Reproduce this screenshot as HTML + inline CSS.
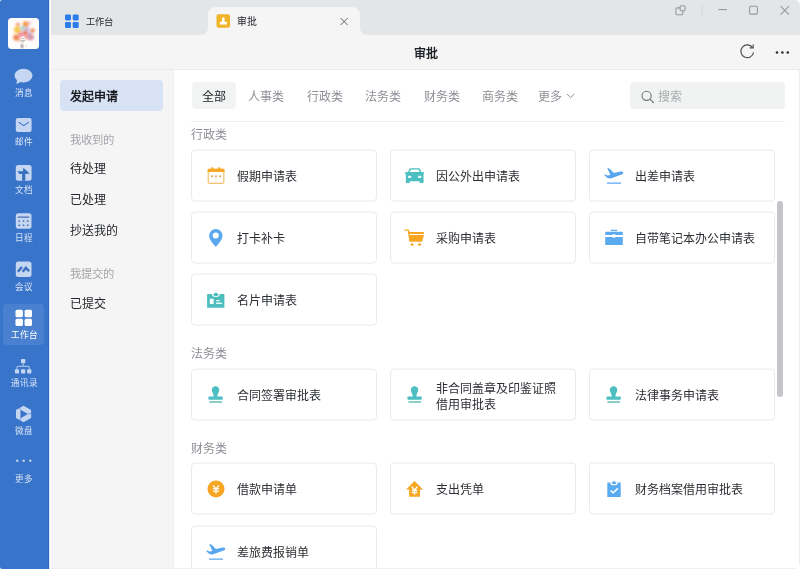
<!DOCTYPE html>
<html lang="zh-CN">
<head>
<meta charset="utf-8">
<title>审批</title>
<style>
*{box-sizing:border-box;margin:0;padding:0}
html,body{width:800px;height:569px;overflow:hidden;background:#fff}
body{font-family:"Liberation Sans",sans-serif;color:#1f2329;position:relative}
svg{display:block;overflow:visible}
#app{position:absolute;left:0;top:0;width:800px;height:569px;overflow:hidden;will-change:transform;border-radius:2px 5px 6px 2px}
#side{position:absolute;left:0;top:0;width:49px;height:569px;background:#3874c9}
#avatar{position:absolute;left:8px;top:18px;width:31px;height:31px;border-radius:3.5px;background:#fefdfc;overflow:hidden}
.sico{position:absolute;left:0;top:0}
.slab{position:absolute;left:0;width:48px;text-align:center;color:#dae5f6;font-size:8.6px;line-height:12px;white-space:nowrap}
#sactive{position:absolute;left:3px;top:304px;width:41px;height:41px;border-radius:4px;background:#4a80d0}
#titlebar{position:absolute;left:49px;top:0;width:751px;height:35px;background:#e3e5e7}
#tab2{position:absolute;left:208px;top:7px;width:152px;height:28px;background:#f5f5f5;border-radius:8px 8px 0 0}
.tabtxt{position:absolute;top:7.6px;line-height:28px;font-size:9.3px;color:#26292e;white-space:nowrap}
#header{position:absolute;left:49px;top:35px;width:751px;height:35px;background:#f5f5f5;border-bottom:1px solid #ebebeb;z-index:3}
#htitle{position:absolute;left:1px;width:751px;top:1.5px;line-height:34px;text-align:center;font-size:12px;font-weight:bold;color:#1f2329}
#nav{position:absolute;left:49px;top:69px;width:125px;height:500px;background:#f5f5f5;border-right:1px solid #eeeeee}
#navsel{position:absolute;left:11px;top:11px;width:103px;height:31px;border-radius:4px;background:#d7e3f5}
.nitem{position:absolute;left:21px;font-size:12px;line-height:20px;white-space:nowrap;color:#24272c}
.ngrey{color:#a3a5a9;font-size:11.3px}
#main{position:absolute;left:174px;top:69px;width:626px;height:500px;background:#fff;overflow:hidden}
.ctab{position:absolute;top:13.6px;height:28px;line-height:28px;font-size:12px;color:#8d9096;white-space:nowrap}
#csel{position:absolute;left:18px;top:13px;width:44px;height:27px;border-radius:4px;background:#f2f3f3}
#search{position:absolute;left:456px;top:13px;width:155px;height:27px;border-radius:4px;background:#f1f2f2}
#divider{position:absolute;left:17px;top:52px;width:594px;height:1px;background:#eeeeee}
.sec{position:absolute;left:17px;font-size:12px;line-height:18px;color:#8d9096;white-space:nowrap}
.card{position:absolute;width:186px;height:52px;border:1px solid #eaeaea;border-radius:4px;background:#fff;transform:translateY(-0.45px)}
.card svg{position:absolute;left:13px;top:14px;transform:translateY(.45px)}
.card span{position:absolute;left:45px;top:1px;transform:translateY(.45px);line-height:50px;font-size:12px;color:#2c2f34;white-space:nowrap}
.card span.two{line-height:16px;top:11px}
#scroll{position:absolute;left:602.6px;top:132px;width:6.6px;height:196px;border-radius:3.3px;background:#c3c5c9}
#edge{position:absolute;left:48px;top:0;width:3px;height:569px;background:linear-gradient(90deg,#3268ba 0,#3268ba 1px,#dfe9f9 1px,#dfe9f9 2px,#fbfcfe 2px,#fbfcfe 3px);z-index:5}
#bedge{position:absolute;left:50px;top:568px;width:750px;height:1px;background:#efefef;z-index:5}
#redge{position:absolute;left:799px;top:70px;width:1px;height:499px;background:#efefef;z-index:5}
</style>
</head>
<body>
<div id="app">
<div id="side">
  <div id="sactive"></div>
  <div id="avatar">
    <svg width="31" height="31" viewBox="0 0 31 31">
      <defs><filter id="bl" x="-30%" y="-30%" width="160%" height="160%"><feGaussianBlur stdDeviation="0.95"/></filter></defs>
      <g filter="url(#bl)">
        <circle cx="9.8" cy="6.6" r="2.1" fill="#f0a382"/>
        <circle cx="17.7" cy="6.2" r="3" fill="#f59b4c"/>
        <circle cx="21.6" cy="4.9" r="1.7" fill="#ecc0cc"/>
        <circle cx="9.3" cy="11.8" r="3.4" fill="#f7c94c"/>
        <circle cx="14.9" cy="10.3" r="2.5" fill="#b4d6d4"/>
        <circle cx="19.2" cy="11.3" r="2.3" fill="#c3b6de"/>
        <circle cx="24.6" cy="12.6" r="2.3" fill="#f08f60"/>
        <circle cx="21.3" cy="15.6" r="1.9" fill="#aab9da"/>
        <circle cx="17.2" cy="15" r="2.5" fill="#f07a52"/>
        <circle cx="13.2" cy="16.2" r="3" fill="#f59aa6"/>
        <circle cx="8.3" cy="19.6" r="3.2" fill="#f08c5c"/>
        <circle cx="22.6" cy="19.2" r="3.3" fill="#d898aa"/>
        <circle cx="18.3" cy="19.2" r="2" fill="#e9a09a"/>
        <circle cx="11.5" cy="22" r="1.6" fill="#f3b090"/>
      </g>
      <circle cx="14.9" cy="20" r="1.6" fill="#fff"/>
      <circle cx="14.9" cy="20.2" r="0.55" fill="#443"/>
      <path d="M13.2 22.4 L14.9 23.4 L16.8 22.2" fill="none" stroke="#332" stroke-width=".7" opacity=".8"/>
      <path d="M14.2 25.2 L12.8 29.6 L15.1 29.6 Z" fill="#3a2c2a" filter="url(#bl)"/>
      <path d="M18 26.6 L18.3 29.2" stroke="#eadfae" stroke-width="1.1" opacity=".8"/>
    </svg>
  </div>
  <svg class="sico" width="49" height="569" viewBox="0 0 49 569">
    <g fill="#c5d6f2">
      <!-- message -->
      <ellipse cx="23.5" cy="75.6" rx="9" ry="6.9"/>
      <path d="M17.2 79.5 L16.3 83.9 L21.5 81.8 Z"/>
      <!-- mail -->
      <rect x="15.8" y="118" width="15.8" height="14" rx="2"/>
      <!-- docs -->
      <rect x="15.8" y="165" width="15.8" height="15.8" rx="2.5"/>
      <!-- calendar -->
      <rect x="15.8" y="213.2" width="15.7" height="15.6" rx="2.5"/>
      <!-- meeting -->
      <rect x="15.8" y="261.4" width="15.7" height="15.7" rx="2.5"/>
      <!-- contacts -->
      <rect x="21" y="358.9" width="4.3" height="4.3" rx=".8"/>
      <rect x="14.9" y="369.2" width="4.2" height="4.3" rx=".8"/>
      <rect x="21" y="369.2" width="4.3" height="4.3" rx=".8"/>
      <rect x="27.1" y="369.2" width="4.3" height="4.3" rx=".8"/>
      <!-- weipan -->
      <path d="M23.55 405.8 L31.1 410 L31.1 418 L23.55 422.3 L16 418 L16 410 Z M20.5 409.7 L20.5 418.3 L27.9 414 Z" fill-rule="evenodd"/>
      <!-- more dots -->
      <circle cx="17.2" cy="460.8" r="1.2"/><circle cx="23.7" cy="460.8" r="1.2"/><circle cx="30.3" cy="460.8" r="1.2"/>
    </g>
    <!-- contacts connectors -->
    <path d="M16.9 369.2 V367.6 Q16.9 366.3 18.2 366.3 H28 Q29.3 366.3 29.3 367.6 V369.2 M23.15 363.2 V366.3" fill="none" stroke="#9dbbe8" stroke-width="1.2"/>
    <!-- mail flap -->
    <path d="M19 122.4 L23.7 125.6 L28.4 122.4" fill="none" stroke="#3974ca" stroke-width="1.1" stroke-linecap="round" stroke-linejoin="round"/>
    <!-- docs glyph -->
    <path d="M23.3 167.8 L29.7 173.5 L25.3 174 L25.3 180.8 L22.1 180.8 L22.1 174 L19.5 174 L17.2 171.2 L22.9 171.2 Z" fill="#3a6fc0"/>
    <!-- calendar glyph -->
    <g fill="#476fb2">
      <rect x="17.7" y="216.4" width="11.6" height="1.3" rx=".3"/>
      <rect x="18.45" y="220.2" width="1.6" height="1.6" rx=".3"/><rect x="22.7" y="220.2" width="1.6" height="1.6" rx=".3"/><rect x="26.9" y="220.2" width="1.6" height="1.6" rx=".3"/>
      <rect x="18.45" y="224.45" width="1.6" height="1.6" rx=".3"/><rect x="22.7" y="224.45" width="1.6" height="1.6" rx=".3"/><rect x="26.9" y="224.45" width="1.6" height="1.6" rx=".3"/>
    </g>
    <!-- meeting glyph -->
    <path d="M17.9 271.7 L21.9 267 M22.7 271.7 L25.9 267.8 L29.1 271.3" fill="none" stroke="#3a6fc0" stroke-width="2.4" stroke-linejoin="miter"/>
    <!-- weipan dividers -->
    <path d="M20.5 409.7 L19.3 407.9 M27.9 414 L31.1 413.3 M20.5 418.3 L20.3 420.6" fill="none" stroke="#3974ca" stroke-width=".55"/>
    <!-- workbench -->
    <g fill="#ffffff">
      <rect x="15.5" y="309.8" width="7.4" height="7.4" rx="1.5"/><rect x="24.6" y="309.8" width="7.4" height="7.4" rx="1.5"/>
      <rect x="15.5" y="318.7" width="7.4" height="7.4" rx="1.5"/><rect x="24.6" y="318.7" width="7.4" height="7.4" rx="1.5"/>
    </g>
  </svg>
  <div class="slab" style="top:87px">消息</div>
  <div class="slab" style="top:135.5px">邮件</div>
  <div class="slab" style="top:184px">文档</div>
  <div class="slab" style="top:232px">日程</div>
  <div class="slab" style="top:280.5px">会议</div>
  <div class="slab" style="top:329px;color:#fff">工作台</div>
  <div class="slab" style="top:377px">通讯录</div>
  <div class="slab" style="top:425px">微盘</div>
  <div class="slab" style="top:473px">更多</div>
</div>
<div id="edge"></div><div id="bedge"></div><div id="redge"></div>
<div id="titlebar">
  <svg width="751" height="35" viewBox="49 0 751 35" style="position:absolute;left:0;top:0">
    <!-- inverse corners for active tab -->
    <path d="M200 35 H208 V27 Q208 35 200 35 Z" fill="#f5f5f5"/>
    <path d="M368 35 H360 V27 Q360 35 368 35 Z" fill="#f5f5f5"/>
    <!-- workbench tab icon -->
    <g fill="#2a7cec">
      <rect x="65" y="14.4" width="6" height="6" rx="1.3"/><rect x="72.7" y="14.4" width="6" height="6" rx="1.3"/>
      <rect x="65" y="22" width="6" height="6" rx="1.3"/><rect x="72.7" y="22" width="6" height="6" rx="1.3"/>
    </g>
    <!-- window controls -->
    <g fill="none" stroke="#97999d" stroke-width="1.1">
      <rect x="675.9" y="7.9" width="6.9" height="6.9" rx="1.4"/>
      <rect x="680.1" y="5.7" width="5" height="5" rx="1.1" fill="#e3e5e7"/>
      <path d="M718.3 9.6 H727"/>
      <rect x="749.6" y="6.3" width="7.8" height="7.8" rx="1.2"/>
      <path d="M780.6 6.2 L789 14.7 M789 6.2 L780.6 14.7"/>
    </g>
    <path d="M702.2 4 V15.5" stroke="#d6d8da" stroke-width="1"/>
  </svg>
</div>
<div id="tab2"></div>
<svg width="160" height="35" viewBox="208 0 160 35" style="position:absolute;left:208px;top:0">
  <rect x="216.5" y="14.3" width="13.5" height="13.5" rx="2" fill="#f0b32a"/>
  <path d="M222.1 18 q0 -.5 .5 -.5 h1.5 q.5 0 .5 .5 v3.8 h1.7 q.6 0 .6 .6 v2 h-7.1 v-2 q0 -.6 .6 -.6 h1.7 Z" fill="#fff"/>
  <path d="M340.6 18 L347.6 25 M347.6 18 L340.6 25" stroke="#5f6368" stroke-width="1" fill="none"/>
</svg>
<div class="tabtxt" style="left:86px">工作台</div>
<div class="tabtxt" style="left:237.3px;font-size:9.9px;font-weight:500;color:#1f2226">审批</div>
<div id="header"><div id="htitle">审批</div>
  <svg width="751" height="34" viewBox="49 35 751 34" style="position:absolute;left:0;top:0">
    <path d="M752.6 47.6 A6.4 6.4 0 1 0 753.6 52.4" fill="none" stroke="#4a4d52" stroke-width="1.15"/>
    <path d="M749.6 47.9 H753.2 V44.5" fill="none" stroke="#4a4d52" stroke-width="1.15"/>
    <circle cx="777" cy="52.5" r="1.3" fill="#2a2d31"/><circle cx="782.4" cy="52.5" r="1.3" fill="#2a2d31"/><circle cx="787.8" cy="52.5" r="1.3" fill="#2a2d31"/>
  </svg>
</div>
<div id="nav">
  <div id="navsel"></div>
  <div class="nitem" style="top:18px;font-weight:bold;color:#1a1d21">发起申请</div>
  <div class="nitem ngrey" style="top:61px">我收到的</div>
  <div class="nitem" style="top:90px">待处理</div>
  <div class="nitem" style="top:121px">已处理</div>
  <div class="nitem" style="top:152px">抄送我的</div>
  <div class="nitem ngrey" style="top:195px">我提交的</div>
  <div class="nitem" style="top:225px">已提交</div>
</div>
<div id="main">
  <div id="csel"></div>
  <div class="ctab" style="left:27.8px;color:#24272c">全部</div>
  <div class="ctab" style="left:74px">人事类</div>
  <div class="ctab" style="left:132.5px">行政类</div>
  <div class="ctab" style="left:191px">法务类</div>
  <div class="ctab" style="left:249.5px">财务类</div>
  <div class="ctab" style="left:308px">商务类</div>
  <div class="ctab" style="left:363.5px">更多</div>
  <svg width="10" height="6" viewBox="0 0 10 6" style="position:absolute;left:391.5px;top:23.8px"><path d="M1 1 L4.7 4.6 L8.4 1" fill="none" stroke="#8d9096" stroke-width="1"/></svg>
  <div id="search">
    <svg width="16" height="16" viewBox="0 0 16 16" style="position:absolute;left:10px;top:6.5px"><circle cx="6.6" cy="6.8" r="4.6" fill="none" stroke="#6e7277" stroke-width="1.1"/><path d="M10 10.2 L13.8 14" stroke="#6e7277" stroke-width="1.1"/></svg>
    <div class="ctab" style="left:28px;top:1.6px;height:27px;line-height:27px;color:#a9abaf">搜索</div>
  </div>
  <div id="divider"></div>
  <div class="sec" style="top:57px">行政类</div>
  <div class="card" style="left:17px;top:81px">
    <svg width="22" height="22" viewBox="0 0 22 22">
      <rect x="3.2" y="4.3" width="15.7" height="14" rx="1" fill="#fffdf8" stroke="#efb14d" stroke-width="1"/>
      <path d="M2.7 7.1 V4.8 Q2.7 3.7 3.8 3.7 H18.3 Q19.4 3.7 19.4 4.8 V7.1 Z" fill="#f6a724"/>
      <rect x="6.4" y="2.3" width="1.9" height="2" rx=".5" fill="#f6a724"/><rect x="13.2" y="2.3" width="1.9" height="2" rx=".5" fill="#f6a724"/>
      <circle cx="6.9" cy="11.2" r=".95" fill="#dca057"/><circle cx="11" cy="11.2" r=".95" fill="#dca057"/><circle cx="15.1" cy="11.2" r=".95" fill="#dca057"/>
    </svg><span>假期申请表</span></div>
  <div class="card" style="left:216px;top:81px">
    <svg width="22" height="22" viewBox="0 0 22 22">
      <g fill="#4cbfc0">
        <path d="M3.6 8 L5.3 4.2 Q5.7 3.3 6.7 3.3 H14.7 Q15.7 3.3 16.1 4.2 L17.8 8 Z M5.6 7.3 H15.8 L14.9 5.1 Q14.7 4.6 14.2 4.6 H7.2 Q6.7 4.6 6.5 5.1 Z" fill-rule="evenodd"/>
        <rect x=".8" y="7.2" width="19.2" height="1.5" rx=".5"/>
        <rect x="1.9" y="7.3" width="17.6" height="8.9" rx="1"/>
        <rect x="1.9" y="15" width="3.9" height="3.1" rx=".4"/><rect x="15.6" y="15" width="3.9" height="3.1" rx=".4"/>
      </g>
      <rect x="4" y="10.8" width="3.2" height="2.3" rx=".4" fill="#eafafa"/><rect x="14" y="10.8" width="3.2" height="2.3" rx=".4" fill="#eafafa"/>
    </svg><span>因公外出申请表</span></div>
  <div class="card" style="left:415px;top:81px">
    <svg width="22" height="22" viewBox="0 0 22 22">
      <g id="plane" fill="#5aa6ee">
        <path d="M4.3 3 C5.6 2.8 6.6 3.6 7.5 4.6 L10.9 8 L17.6 6.5 C19.2 6.2 20.5 6.8 20.2 8 C20 9 18.6 9.6 17.2 10 L8.4 13.2 C6.2 13.9 4.4 13.3 3 11.8 L1.4 10.2 C1 9.7 1.6 9.3 2.2 9.5 L4.6 10.6 L7.3 9.9 Z"/>
        <rect x="4" y="17.5" width="14" height="1.35" rx=".3"/>
      </g>
    </svg><span>出差申请表</span></div>
  <div class="card" style="left:17px;top:143px">
    <svg width="22" height="22" viewBox="0 0 22 22">
      <path d="M10.8 19.9 C10.8 19.9 4.05 13.4 4.05 8.85 A6.75 6.75 0 0 1 17.55 8.85 C17.55 13.4 10.8 19.9 10.8 19.9 Z M10.75 5.4 A3 3 0 1 0 10.75 11.4 A3 3 0 1 0 10.75 5.4 Z" fill="#5ba8ef" fill-rule="evenodd"/>
    </svg><span>打卡补卡</span></div>
  <div class="card" style="left:216px;top:143px">
    <svg width="22" height="22" viewBox="0 0 22 22">
      <g fill="#f6a623">
        <path d="M.5 2.4 H4.3 Q4.9 2.4 5 3 L6.6 14.6 H5.3 L3.8 3.7 H.5 Z"/>
        <rect x="4.8" y="5.1" width="15.2" height="1.8" rx=".4"/>
        <path d="M5.1 7.9 H20 L18.3 14 Q18.1 14.7 17.4 14.7 H6 Z"/>
        <circle cx="8.1" cy="17.6" r="1.45"/><circle cx="15.6" cy="17.6" r="1.45"/>
      </g>
    </svg><span>采购申请表</span></div>
  <div class="card" style="left:415px;top:143px">
    <svg width="22" height="22" viewBox="0 0 22 22">
      <g fill="#5aaaf0">
        <rect x="7.8" y="2.7" width="6.4" height="1.4" rx=".4"/>
        <path d="M2.2 5.3 Q2.2 4.7 2.8 4.7 H19.2 Q19.8 4.7 19.8 5.3 V8.1 H2.2 Z"/>
        <path d="M2.2 9.9 H19.8 V17.5 Q19.8 18.1 19.2 18.1 H2.8 Q2.2 18.1 2.2 17.5 Z"/>
      </g>
      <circle cx="11" cy="8.9" r="1.9" fill="#fff"/>
    </svg><span>自带笔记本办公申请表</span></div>
  <div class="card" style="left:17px;top:205px">
    <svg width="22" height="22" viewBox="0 0 22 22">
      <path d="M2.1 5.7 Q2.1 5.1 2.7 5.1 H18.8 Q19.4 5.1 19.4 5.7 V18.2 Q19.4 18.8 18.8 18.8 H2.7 Q2.1 18.8 2.1 18.2 Z" fill="#4dbdbe"/>
      <path d="M6.9 5.1 A4 2.9 0 0 0 14.9 5.1 Z" fill="#fff"/>
      <path d="M8.1 5.1 A2.8 2.1 0 0 0 13.7 5.1 L12.1 4.6 L10.9 3.3 L9.7 4.6 Z" fill="#4dbdbe"/>
      <rect x="4.8" y="9.7" width="3.8" height="5.3" rx=".3" fill="#fff"/>
      <rect x="11.1" y="11.1" width="3.6" height="1.2" fill="#eafafa"/><rect x="11.1" y="13.6" width="6" height="1.4" fill="#eafafa"/>
    </svg><span>名片申请表</span></div>
  <div class="sec" style="top:276px">法务类</div>
  <div class="card" style="left:17px;top:300px">
    <svg width="22" height="22" viewBox="0 0 22 22">
      <g id="stamp">
        <path d="M10.55 2.3 C12.7 2.3 14.3 3.9 14.3 5.9 C14.3 7.9 12.6 9.3 12.3 12.5 H16.9 Q17.8 12.5 17.8 13.4 V14.8 Q17.8 15.7 16.9 15.7 H4.3 Q3.4 15.7 3.4 14.8 V13.4 Q3.4 12.5 4.3 12.5 H8.8 C8.5 9.3 6.8 7.9 6.8 5.9 C6.8 3.9 8.4 2.3 10.55 2.3 Z" fill="#4dbfc3"/>
        <rect x="4.4" y="17.2" width="12.7" height="1.6" rx=".3" fill="#68bdb5"/>
      </g>
    </svg><span>合同签署审批表</span></div>
  <div class="card" style="left:216px;top:300px">
    <svg width="22" height="22" viewBox="0 0 22 22"><use href="#stamp"/></svg><span class="two">非合同盖章及印鉴证照<br>借用审批表</span></div>
  <div class="card" style="left:415px;top:300px">
    <svg width="22" height="22" viewBox="0 0 22 22"><use href="#stamp"/></svg><span>法律事务申请表</span></div>
  <div class="sec" style="top:370.5px">财务类</div>
  <div class="card" style="left:17px;top:394px">
    <svg width="22" height="22" viewBox="0 0 22 22">
      <circle cx="11" cy="11" r="8.5" fill="#f6a623"/>
      <path id="yen" d="M8 7.3 L11 10.9 L14 7.3 M11 10.6 V15.6 M7.9 10.7 H14.1 M7.9 13.2 H14.1" fill="none" stroke="#fff" stroke-width="1.3"/>
    </svg><span>借款申请单</span></div>
  <div class="card" style="left:216px;top:394px">
    <svg width="22" height="22" viewBox="0 0 22 22">
      <path d="M10.55 3 L18.8 11.2 Q19 11.5 18.6 11.5 H16 V18.2 Q16 18.8 15.4 18.8 H5.7 Q5.1 18.8 5.1 18.2 V11.5 H2.5 Q2.1 11.5 2.3 11.2 Z" fill="#f6a623"/>
      <path d="M7.6 8.6 L10.55 12 L13.5 8.6 M10.55 12 V16.8 M7.8 12.4 H13.3 M7.8 14.5 H13.3" fill="none" stroke="#fff" stroke-width="1.3"/>
    </svg><span>支出凭单</span></div>
  <div class="card" style="left:415px;top:394px">
    <svg width="22" height="22" viewBox="0 0 22 22">
      <path d="M4.3 5 Q4.3 4.4 4.9 4.4 H17.1 Q17.7 4.4 17.7 5 V18.4 Q17.7 19 17.1 19 H4.9 Q4.3 19 4.3 18.4 Z" fill="#5aaaf0"/>
      <path d="M7 4.4 A4 2.8 0 0 0 15 4.4 Z" fill="#fff"/>
      <path d="M8.6 4.4 A2.4 1.8 0 0 0 13.4 4.4 L12.1 3.9 L11 2.7 L9.9 3.9 Z" fill="#5aaaf0"/>
      <path d="M7.6 12.5 L10.1 14.7 L14.9 10.4" fill="none" stroke="#fff" stroke-width="1.5"/>
    </svg><span>财务档案借用审批表</span></div>
  <div class="card" style="left:17px;top:457px">
    <svg width="22" height="22" viewBox="0 0 22 22"><use href="#plane"/></svg><span>差旅费报销单</span></div>
  <div id="scroll"></div>
</div>

</div>
</body>
</html>
